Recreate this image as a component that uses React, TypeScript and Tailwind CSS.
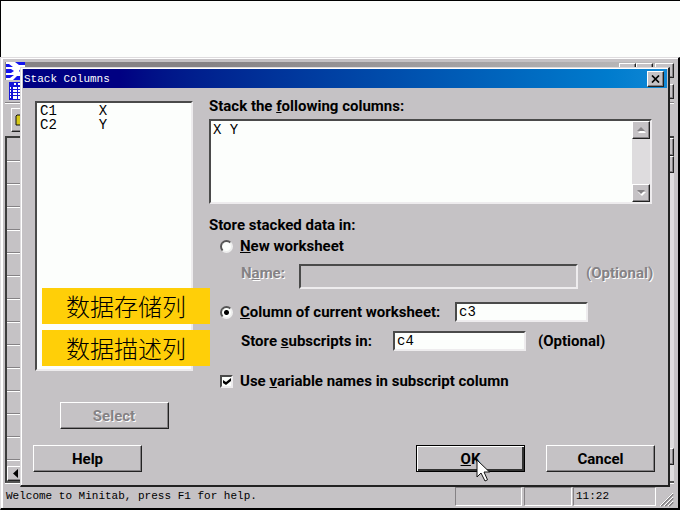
import React from "react";

const raised =
  "border border-t-white border-l-white border-r-[#222] border-b-[#222] shadow-[inset_-1px_-1px_0_#858285] bg-[#c5c2c5]";
const sunken =
  "border-2 border-t-[#4a4a4a] border-l-[#4a4a4a] border-r-[#eeecee] border-b-[#eeecee] rounded-none";
const disabledText = "text-[#858285] [text-shadow:1px_1px_0_#fff]";
const mono = "font-['Liberation_Mono',monospace]";

function Arrow({ down = false, dim = false }: { down?: boolean; dim?: boolean }) {
  return (
    <svg width="9" height="6" viewBox="0 0 9 6" aria-hidden="true">
      {dim && <path d={down ? "M1 1h8l-4 4z" : "M5 1l4 4H1z"} fill="#fff" transform="translate(0 1)" />}
      <path d={down ? "M0 0h8L4 4z" : "M4 0l4 4H0z"} fill={dim ? "#858285" : "#111"} />
    </svg>
  );
}

function PushButton({
  children,
  disabled,
  primary,
}: {
  children: React.ReactNode;
  disabled?: boolean;
  primary?: boolean;
}) {
  return (
    <button
      disabled={disabled}
      className={`h-[27px] w-[109px] shrink-0 text-center leading-[24px] ${raised} ${disabled ? disabledText : ""} ${
        primary ? "outline outline-1 -outline-offset-1 outline-black shadow-[inset_1px_1px_0_#fff,inset_-2px_-2px_0_#333]" : ""
      }`}
    >
      {children}
    </button>
  );
}

function Radio({ id, checked }: { id: string; checked?: boolean }) {
  return (
    <input
      type="radio"
      id={id}
      name="target"
      defaultChecked={checked}
      className="size-[13px] shrink-0 appearance-none rounded-full border-2 border-t-[#555] border-l-[#555] border-r-[#eee] border-b-[#eee] bg-[#fcfefc] checked:bg-[radial-gradient(circle,#000_2px,#fcfefc_3px)]"
    />
  );
}

function MainWindow() {
  return (
    <div className="flex flex-1 flex-col border-t border-l-2 border-white pt-[3px] pr-1 pl-[2px]">
      <div className="flex h-[18px] items-start justify-between bg-linear-to-r from-[#858285] from-30% to-[#bdbcbd]">
        <svg width="20" height="18" viewBox="0 0 20 18" aria-hidden="true">
          <path fill="#fff" d="M1 0h19v18H1z" />
          <path
            fill="#1414ee"
            d="M1 2h3l4 3H1zM1 7h5l3 2-3 2H1zM1 13h8l-4 3H1zM10 0h10v3h-6zM16 6l4-1v7l-4-1-2-2zM12 14h5l3 2v2H8z"
          />
        </svg>
        <div className="mt-px flex">
          <span className={`h-[15px] w-[17px] ${raised}`} />
          <span className={`h-[15px] w-[17px] ${raised}`} />
          <span className={`ml-[2px] h-[15px] w-[19px] ${raised}`} />
        </div>
      </div>
      <div className="flex h-[22px] items-center justify-between pl-1">
        <svg width="16" height="18" viewBox="0 0 16 18" aria-hidden="true">
          <path fill="#1414d8" d="M0 0h16v18H0z" />
          <path
            fill="#fff"
            d="M5 1h2v2H5zM9 1h5v2H9zM4 5h4v2H4zM9 5h6v2H9zM4 8h4v2H4zM9 8h6v2H9zM4 11h4v2H4zM9 11h6v2H9zM4 14h4v3H4zM9 14h6v3H9zM1 5h1v2H1zM1 8h1v2H1zM1 11h1v2H1zM1 14h1v2H1z"
          />
        </svg>
        <span className={`h-[15px] w-[17px] ${raised}`} />
      </div>
      <div className="flex h-[34px] items-center border-t border-[#858285] pl-[6px] shadow-[inset_0_1px_0_#fff]">
        <span className={`flex size-6 items-center justify-center ${raised}`}>
          <svg width="16" height="12" viewBox="0 0 16 12" aria-hidden="true">
            <path d="M1 11V2l1-1h4l1 2h6v8z" fill="#d6c818" stroke="#111" />
          </svg>
        </span>
      </div>
      <div className="flex flex-1 justify-between border-t-2 border-b-2 border-l-2 border-t-[#3c3c3c] border-b-[#555] border-l-[#3c3c3c]">
        <div className="flex w-8 flex-col">
          {Array.from({ length: 14 }, (_, i) => (
            <div key={i} className="h-[23px] shrink-0 border-b border-[#858285] shadow-[0_1px_0_#fff]" />
          ))}
          <div className={`mt-auto flex h-[15px] w-4 items-center justify-center ${raised}`}>
            <svg width="5" height="9" viewBox="0 0 5 9" aria-hidden="true">
              <path d="M5 0v9L0 4.5z" />
            </svg>
          </div>
        </div>
        <div className="flex w-4 flex-col bg-[#dedcde]">
          <span className={`h-[18px] ${raised}`} />
          <span className={`h-[17px] ${raised}`} />
          <span className={`mt-auto mb-4 h-[17px] ${raised}`} />
        </div>
      </div>
      <div className={`flex h-[25px] items-center border-t border-white text-[11px] ${mono}`}>
        <span className="flex-1 pl-px whitespace-pre">Welcome to Minitab, press F1 for help.</span>
        <span className="h-[19px] w-[67px] border border-t-[#858285] border-l-[#858285] border-r-white border-b-white" />
        <span className="ml-[2px] h-[19px] w-12 border border-t-[#858285] border-l-[#858285] border-r-white border-b-white" />
        <span className="ml-px h-[19px] w-[83px] border border-t-[#858285] border-l-[#858285] border-r-white border-b-white pl-[2px] leading-[17px]">
          11:22
        </span>
        <svg className="ml-1 self-end" width="14" height="18" viewBox="0 0 14 18" aria-hidden="true">
          <path d="M1 16L13 4M5 16l8-8M9 16l4-4" stroke="#858285" strokeWidth="2" />
          <path d="M0 16L13 3M4 16l9-9M8 16l5-5" stroke="#fff" />
        </svg>
      </div>
    </div>
  );
}

function StackColumnsDialog() {
  return (
    <div
      role="dialog"
      aria-labelledby="dialog-title"
      className="absolute top-[9px] right-[8px] left-[19px] border border-r-2 border-b-2 border-t-[#dedcde] border-l-[#dedcde] border-r-[#222] border-b-[#222] bg-[#c5c2c5] text-[15px] leading-[18px] font-bold"
    >
      <div className="border-t border-l border-white">
        <div className="mr-px ml-px flex h-[19px] items-center justify-between bg-linear-to-r from-[#000082] from-15% to-[#1088d6] pr-[3px] pl-px">
          <h1 id="dialog-title" className={`text-[11px] font-normal text-white ${mono}`}>
            Stack Columns
          </h1>
          <button aria-label="Close" className={`flex h-4 w-[17px] items-center justify-center ${raised}`}>
            <svg width="9" height="8" viewBox="0 0 9 8" aria-hidden="true">
              <path d="M1 0.5L8 7.5M8 0.5L1 7.5" stroke="#000" strokeWidth="1.7" />
            </svg>
          </button>
        </div>

        <form className="pt-[9px] pb-[13px]" onSubmit={(e) => e.preventDefault()}>
          <div className="flex gap-4 pr-4 pl-[13px]">
            <div className="flex w-[158px] shrink-0 flex-col pt-1">
              <select
                size={2}
                aria-label="Columns"
                className={`h-[270px] w-full overflow-hidden bg-[#fcfefc] text-[14px] leading-[14px] font-normal ${sunken} ${mono}`}
              >
                <option className="h-[14px] min-h-0 py-0 pl-[3px]">{"C1\u00a0\u00a0\u00a0\u00a0\u00a0X"}</option>
                <option className="h-[14px] min-h-0 py-0 pl-[3px]">{"C2\u00a0\u00a0\u00a0\u00a0\u00a0Y"}</option>
              </select>
              <div className="mt-[31px] flex justify-center">
                <PushButton disabled>Select</PushButton>
              </div>
            </div>

            <div className="min-w-0 flex-1">
              <label htmlFor="source" className="mb-1 block">
                Stack the <u>f</u>ollowing columns:
              </label>
              <div className={`flex h-[85px] bg-[#fcfefc] ${sunken}`}>
                <textarea
                  id="source"
                  defaultValue="X Y"
                  className={`min-w-0 flex-1 resize-none overflow-hidden bg-transparent pl-[2px] text-[14px] leading-[18px] font-normal outline-none ${mono}`}
                />
                <div className="flex w-[18px] flex-col justify-between bg-[#dedcde]">
                  <button aria-label="Scroll up" className={`flex h-[18px] items-center justify-center ${raised}`}>
                    <Arrow dim />
                  </button>
                  <button aria-label="Scroll down" className={`flex h-[18px] items-center justify-center ${raised}`}>
                    <Arrow down dim />
                  </button>
                </div>
              </div>

              <fieldset className="mt-3">
                <legend>Store stacked data in:</legend>
                <div className="mt-[3px] flex items-center gap-[7px] pl-[11px]">
                  <Radio id="new-sheet" />
                  <label htmlFor="new-sheet">
                    <u>N</u>ew worksheet
                  </label>
                </div>
                <div className="mt-[9px] flex items-start pl-8">
                  <label htmlFor="sheet-name" className={`w-[58px] shrink-0 ${disabledText}`}>
                    N<u>a</u>me:
                  </label>
                  <input id="sheet-name" disabled className={`h-[25px] w-[279px] bg-[#c5c2c5] ${sunken}`} />
                  <span className={`ml-2 ${disabledText}`}>(Optional)</span>
                </div>
                <div className="mt-[13px] flex items-center gap-[7px] pl-[11px]">
                  <Radio id="current-sheet" checked />
                  <label htmlFor="current-sheet" className="w-[208px] shrink-0">
                    <u>C</u>olumn of current worksheet:
                  </label>
                  <input
                    aria-label="Column"
                    defaultValue="c3"
                    className={`h-5 w-[133px] bg-[#fcfefc] pl-[2px] text-[14px] font-normal ${sunken} ${mono}`}
                  />
                </div>
                <div className="mt-[9px] flex items-center pl-8">
                  <label htmlFor="subscripts" className="w-[152px] shrink-0">
                    Store <u>s</u>ubscripts in:
                  </label>
                  <input
                    id="subscripts"
                    defaultValue="c4"
                    className={`h-5 w-[133px] bg-[#fcfefc] pl-[2px] text-[14px] font-normal ${sunken} ${mono}`}
                  />
                  <span className="ml-3">(Optional)</span>
                </div>
              </fieldset>
              <div className="mt-[21px] flex items-center gap-[7px] pl-[11px]">
                <span className="relative flex">
                  <input
                    type="checkbox"
                    id="use-names"
                    defaultChecked
                    className={`peer size-[13px] appearance-none bg-[#fcfefc] ${sunken}`}
                  />
                  <svg
                    className="pointer-events-none absolute top-[3px] left-[3px] hidden peer-checked:block"
                    width="8"
                    height="7"
                    viewBox="0 0 8 7"
                    aria-hidden="true"
                  >
                    <path d="M0 2l3 2L8 0v3L3 7 0 5z" />
                  </svg>
                </span>
                <label htmlFor="use-names">
                  Use <u>v</u>ariable names in subscript column
                </label>
              </div>
            </div>
          </div>

          <div className="mt-4 flex justify-between pr-[13px] pl-[11px]">
            <PushButton>Help</PushButton>
            <div className="flex gap-[21px]">
              <PushButton primary>
                <u>O</u>K
              </PushButton>
              <PushButton>Cancel</PushButton>
            </div>
          </div>
        </form>
      </div>

      <div className="absolute top-[220px] left-[21px] flex flex-col gap-[6px] text-center text-[24px] leading-[36px] font-light font-['Noto_Sans_CJK_SC',sans-serif]">
        <p className="w-[168px] bg-[#ffcf08]">数据存储列</p>
        <p className="w-[168px] bg-[#ffcf08]">数据描述列</p>
      </div>

      <svg className="absolute right-[178px] bottom-[3px]" width="14" height="23" viewBox="0 0 14 23" aria-hidden="true">
        <path d="M1 1v17l4-4 4 8 2.500-1.200L8 13h5.500z" fill="#fff" stroke="#111" />
      </svg>
    </div>
  );
}

export default function App() {
  return (
    <div className="flex min-h-screen flex-col bg-[#fcfefc] font-[Roboto,'Liberation_Sans',sans-serif] text-black">
      <div className="h-[57px] border-t border-l border-black" />
      <main className="relative flex flex-1 flex-col border-t border-r-2 border-b-2 border-l border-t-[#dedcde] border-r-black border-b-black border-l-[#dedcde] bg-[#c5c2c5]">
        <MainWindow />
        <StackColumnsDialog />
      </main>
    </div>
  );
}
